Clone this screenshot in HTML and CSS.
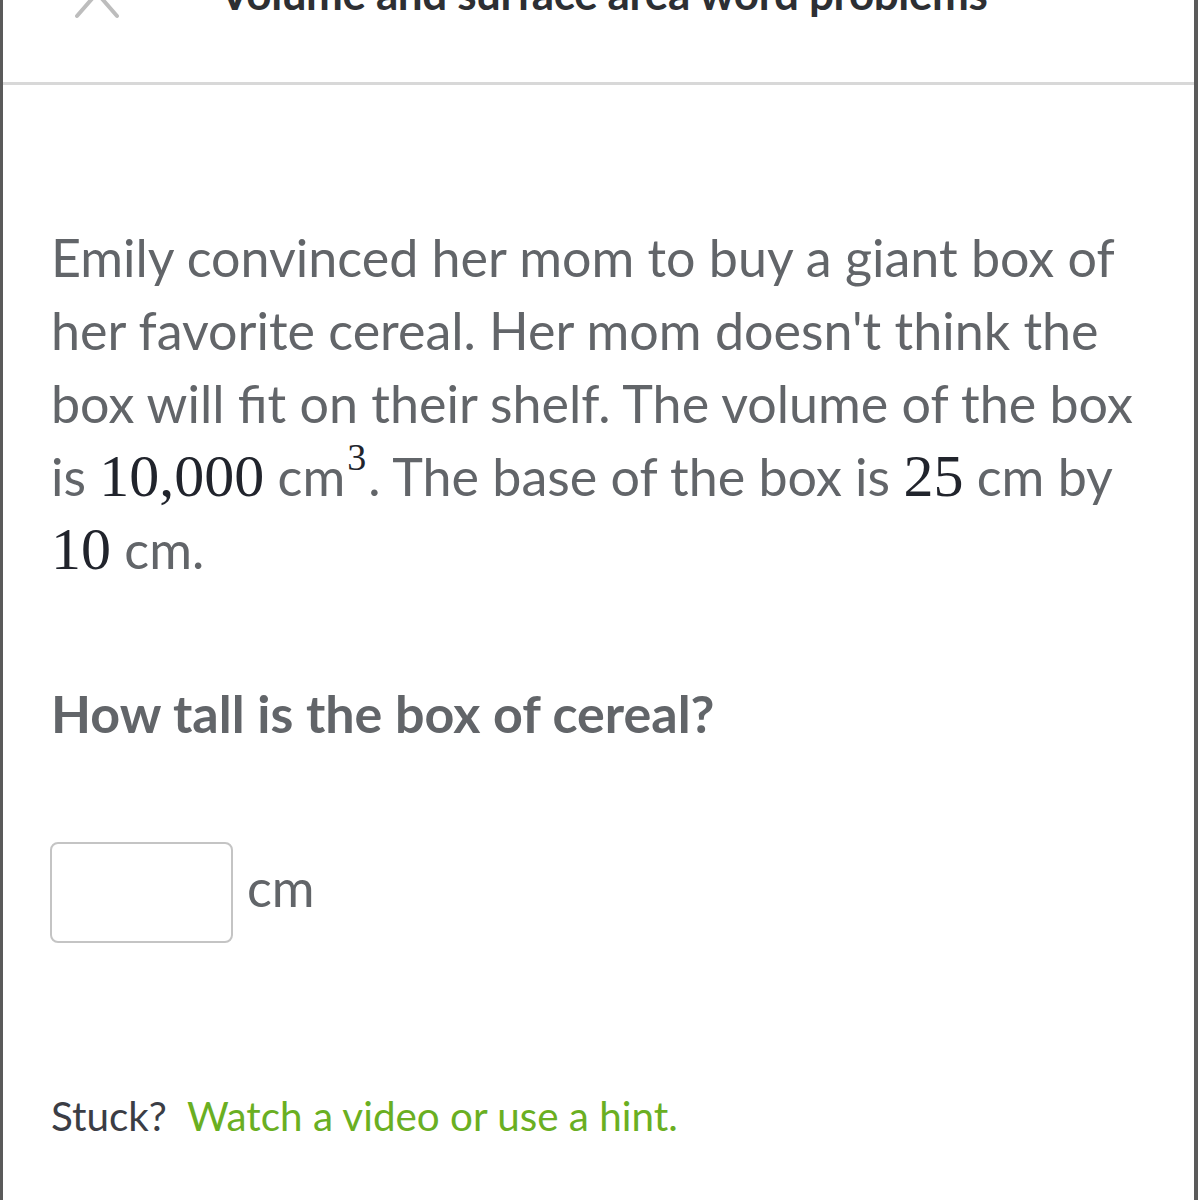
FILE: index.html
```html
<!DOCTYPE html>
<html>
<head>
<meta charset="utf-8">
<link rel="stylesheet" href="styles.css">
</head>
<body>
<div class="frame">
  <header class="topbar">
    <svg class="close" width="60" height="40" viewBox="0 0 60 40">
      <path d="M10 -30 L50 16 M50 -30 L10 16" stroke="#bdbdbd" stroke-width="4" stroke-linecap="round" fill="none"/>
    </svg>
    <div class="title">Volume and surface area word problems</div>
  </header>
  <main class="content">
    <p class="problem">Emily convinced her mom to buy a giant box of her favorite cereal. Her mom doesn't think the box will ﬁt on their shelf. The volume of the box is <span class="num">10,000</span> cm<sup class="num sup">3</sup>. The base of the box is <span class="num">25</span> cm by <span class="num">10</span> cm.</p>
    <p class="question">How tall is the box of cereal?</p>
    <div class="answer">
      <div class="input"></div>
      <span class="unit">cm</span>
    </div>
    <p class="stuck">Stuck?&nbsp; <span class="hint">Watch a video or use a hint.</span></p>
  </main>
</div>
</body>
</html>
```
FILE: styles.css
```css
html, body {
  margin: 0;
  padding: 0;
  background: #fff;
}
.frame {
  width: 1198px;
  height: 1200px;
  box-sizing: border-box;
  border-left: 3px solid #5a5a5a;
  border-right: 4px solid #5a5a5a;
  overflow: hidden;
  font-family: Lato, "Liberation Sans", sans-serif;
}
.topbar {
  height: 82px;
  border-bottom: 3px solid #d8d8d8;
  display: flex;
  align-items: flex-start;
  position: relative;
}
.close {
  position: absolute;
  left: 64px;
  top: 0;
}
.title {
  flex: 1;
  text-align: center;
  font-weight: 700;
  font-size: 44px;
  color: #2d2f33;
  margin-top: -32px;
  line-height: 50px;
  letter-spacing: -0.4px;
  padding-left: 10px;
}
.content {
  padding: 0 44px 0 48px;
}
.problem {
  margin: 136px 0 0 0;
  font-size: 52px;
  line-height: 73px;
  color: #626569;
}
.num {
  font-family: "Liberation Serif", "DejaVu Serif", serif;
  color: #21242c;
  font-size: 60px;
}
.sup {
  font-size: 38px;
  vertical-align: 0;
  position: relative;
  top: -26px;
  line-height: 0;
  margin-left: 2px;
  margin-right: 2px;
}
.question {
  margin: 97px 0 0 0;
  font-size: 52px;
  font-weight: 700;
  line-height: 60px;
  color: #626569;
}
.answer {
  margin-top: 99px;
  display: flex;
  align-items: center;
  gap: 14px;
}
.input {
  width: 179px;
  height: 97px;
  border: 2px solid #c4c4c4;
  border-radius: 8px;
  margin-left: -1px;
}
.unit {
  font-size: 52px;
  color: #626569;
  margin-top: -12px;
}
.stuck {
  margin: 148px 0 0 0;
  font-size: 40.4px;
  color: #3b3d45;
  line-height: 50px;
}
.hint {
  color: #6aaf22;
}
```
